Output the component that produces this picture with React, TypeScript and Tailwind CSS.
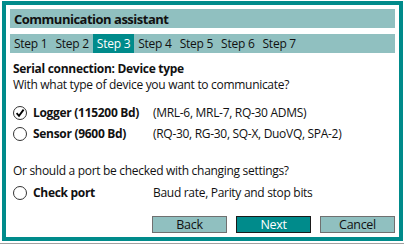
import { ReactNode } from "react";

const steps = ["Step 1", "Step 2", "Step 3", "Step 4", "Step 5", "Step 6", "Step 7"];

function Radio({ checked }: { checked?: boolean }) {
  return (
    <svg width="14" height="14" viewBox="0 0 14 14" className="shrink-0">
      <circle cx="7" cy="7" r="6.5" fill="#fff" stroke="#333" strokeWidth="1" />
      {checked && (
        <path d="M3.6 7.2 L6 9.8 L10.6 3.6" fill="none" stroke="#000" strokeWidth="1.8" />
      )}
    </svg>
  );
}

function Option({ checked, label, detail }: { checked?: boolean; label: string; detail: ReactNode }) {
  return (
    <div className="flex items-center h-[20px]">
      <div className="w-[20px] flex justify-start">
        <Radio checked={checked} />
      </div>
      <span className="w-[120px] font-bold">{label}</span>
      <span>{detail}</span>
    </div>
  );
}

export default function App() {
  return (
    <div className="w-[404px] h-[244px] bg-white relative overflow-hidden text-[12px] leading-[16px] text-[#111] font-['Open_Sans',sans-serif] tracking-[-0.3px]">
      <div className="ml-[2px] mt-[1px] w-[401px] h-[240px] border-4 border-[#008b8b] p-[4px] flex flex-col">
        {/* header */}
        <div className="h-[19px] bg-[#90c0c0] pl-[4px] flex items-center font-bold text-[13px] tracking-[-0.5px]">
          Communication assistant
        </div>

        {/* steps */}
        <div className="mt-[6px] h-[19px] bg-[#90c0c0] flex text-[12px] tracking-[-0.25px]">
          {steps.map((s) => (
            <div
              key={s}
              className={
                s === "Step 3"
                  ? "px-[4px] flex items-center bg-[#008b8b] text-white"
                  : "px-[4px] flex items-center"
              }
            >
              {s}
            </div>
          ))}
        </div>

        <div className="pl-[3px] mt-[8px] flex flex-col">
          <div className="font-bold leading-[15px]">Serial connection: Device type</div>
          <div className="mt-[1px]">With what type of device you want to communicate?</div>

          <div className="mt-[10px] flex flex-col gap-[1px]">
            <Option checked label="Logger (115200 Bd)" detail="(MRL-6, MRL-7, RQ-30 ADMS)" />
            <Option label="Sensor (9600 Bd)" detail="(RQ-30, RG-30, SQ-X, DuoVQ, SPA-2)" />
          </div>

          <div className="mt-[19px]">Or should a port be checked with changing settings?</div>
          <div className="mt-[4px]">
            <Option label="Check port" detail="Baud rate, Parity and stop bits" />
          </div>
        </div>

        <div className="mt-auto flex justify-end gap-[9px]">
          <button className="w-[75px] h-[17px] border border-[#707070] bg-[#90c0c0] text-[12.5px] leading-[15px]">
            Back
          </button>
          <button className="w-[75px] h-[17px] border border-[#1a1a1a] bg-[#008b8b] text-white text-[12.5px] leading-[15px]">
            Next
          </button>
          <button className="w-[75px] h-[17px] border border-[#707070] bg-[#90c0c0] text-[12.5px] leading-[15px]">
            Cancel
          </button>
        </div>
      </div>
      <div className="absolute left-0 right-0 top-[243px] h-px bg-[#a0a0a0]" />
    </div>
  );
}
